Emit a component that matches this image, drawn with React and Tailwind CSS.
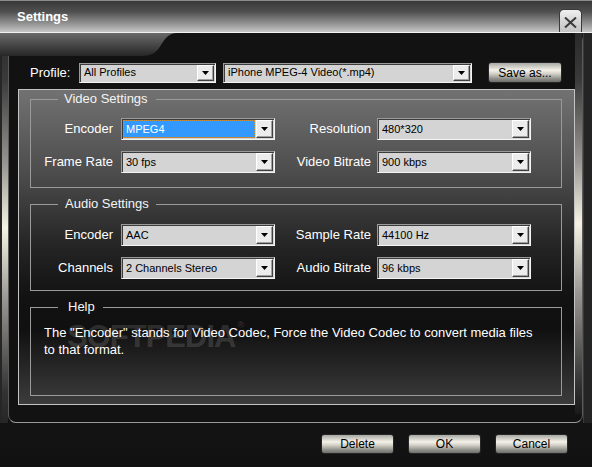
import React from "react";

const metal =
  "bg-[linear-gradient(to_bottom,#a8a8a4_0%,#f4f2e8_38%,#d6d4ca_55%,#8a8a86_85%,#6e6e6c_100%)]";

function Arrow() {
  return (
    <div className="flex w-[17px] items-center justify-center border border-t-white border-l-white border-b-[#404040] border-r-[#404040] bg-[#ececec] shadow-[inset_-1px_-1px_0_#a0a0a0]">
      <svg width="7" height="4" viewBox="0 0 7 4">
        <path d="M0 0H7L3.5 4Z" fill="#000" />
      </svg>
    </div>
  );
}

function Select({ value, size, focused }) {
  return (
    <div
      className={`flex ${size} border border-t-[#9a9a9a] border-l-[#9a9a9a] border-b-[#f4f4f4] border-r-[#f4f4f4] bg-[#d4d4d4] p-[1px] shadow-[inset_1px_1px_0_#3c3c3c]`}
    >
      {focused ? (
        <div className="mr-[1px] flex flex-1 items-center border border-dotted border-[#c8903c] bg-[#3399ff] pl-[2px] text-[11px] text-white">
          {value}
        </div>
      ) : (
        <div className="flex flex-1 items-center pl-[3px] text-[11px] text-black">{value}</div>
      )}
      <Arrow />
    </div>
  );
}

function MetalButton({ children, size }) {
  return (
    <button
      className={`flex ${size} items-center justify-center rounded-[3px] border border-[#262626] ${metal} text-[12px] leading-none text-black`}
    >
      {children}
    </button>
  );
}

function Group({ title, legendPad, children, className }) {
  return (
    <fieldset className={`relative border border-[#9a9a9a] ${className}`}>
      <legend className={`ml-[27px] ${legendPad} text-[13px] leading-[16px] text-[#f4f4f4]`}>
        {title}
      </legend>
      {children}
    </fieldset>
  );
}

function Label({ children }) {
  return <div className="text-right text-[13px] text-white">{children}</div>;
}

function SettingsGrid({ rows }) {
  return (
    <div className="grid grid-cols-[82px_154px_87px_154px] items-center gap-x-[8px] gap-y-[11px]">
      {rows.map((r, i) => (
        <React.Fragment key={i}>
          <Label>{r[0]}</Label>
          <Select value={r[1]} size="h-[22px] w-[154px]" focused={r[4]} />
          <div className="-mr-[1px]">
            <Label>{r[2]}</Label>
          </div>
          <div className="-ml-[1px]">
            <Select value={r[3]} size="h-[22px] w-[154px]" />
          </div>
        </React.Fragment>
      ))}
    </div>
  );
}

export default function App() {
  return (
    <div className="flex h-[467px] w-[592px] flex-col overflow-hidden bg-[linear-gradient(to_bottom,#1e1e20_0%,#1b1b1d_60%,#111112_100%)] font-['Liberation_Sans',Arial,sans-serif]">
      {/* title bar */}
      <div className="flex h-[32px] justify-between border-t border-[#8a8a8a] bg-[linear-gradient(to_bottom,#383838_0%,#505050_35%,#9c9c9c_78%,#c6c6c6_100%)] pl-[17px] pr-[10px]">
        <div className="self-center pt-[1px] text-[13px] font-bold text-white">Settings</div>
        <button className="flex h-[23px] w-[23px] items-end justify-center self-end rounded-t-[5px] border border-b-0 border-[#3a3a3a] bg-[linear-gradient(to_bottom,#f0f0f0_0%,#d6d6d6_50%,#c4c4c4_100%)] pb-[4px]">
          <svg width="13" height="11" viewBox="0 0 13 11">
            <path d="M1 0.5L12 10.5M12 0.5L1 10.5" stroke="#3a3a3a" strokeWidth="2" />
          </svg>
        </button>
      </div>
      <div className="h-[1px] bg-[#f2f2f2]" />

      {/* body */}
      <div className="relative flex h-[390px]">
        <svg className="absolute left-0 top-0 z-10" width="180" height="23" viewBox="0 0 180 23">
          <defs>
            <linearGradient id="tab" x1="0" y1="0" x2="0" y2="1">
              <stop offset="0" stopColor="#6a6a6a" />
              <stop offset="1" stopColor="#262626" />
            </linearGradient>
          </defs>
          <path d="M0 0H178C168 0 165 6 161 12C157 19 152 23 143 23H0Z" fill="url(#tab)" />
        </svg>

        <div className="flex w-[8px] bg-[#262626] pl-[2px]">
          <div className="w-[6px] bg-[linear-gradient(to_bottom,#2a2a2a_0%,#3a3a3a_12%,#9a9894_34%,#f6f3e4_50%,#9a9894_68%,#333_92%,#262626_100%)]" />
        </div>

        <div className="flex flex-1 rounded-b-[8px] rounded-tr-[8px] border-x border-b border-x-[#5a5a5a] border-b-[#9a9a9a] bg-[#121212]">
          <div className="flex flex-1 flex-col pl-[9px] pt-[29px]">
            {/* profile row */}
            <div className="flex h-[21px] items-center pl-[12px]">
              <div className="w-[49px] text-[13px] text-white">Profile:</div>
              <Select value="All Profiles" size="h-[20px] w-[137px]" />
              <div className="ml-[7px]">
                <Select value="iPhone MPEG-4 Video(*.mp4)" size="h-[20px] w-[249px]" />
              </div>
              <div className="ml-[16px]">
                <MetalButton size="h-[21px] w-[74px]">Save as...</MetalButton>
              </div>
            </div>

            {/* main box */}
            <div className="mt-[6px] flex flex-col border border-[#c4c4c4] bg-[linear-gradient(to_bottom,#727272_0%,#4a4a4a_28%,#242424_50%,#121212_66%,#101010_76%,#3c3c3c_100%)] pb-[8px] pl-[11px] pr-[12px] pt-[1px]">
              <Group title="Video Settings" legendPad="pl-[6px] pr-[8px]" className="pb-[14px]">
                <div className="pt-[11px]">
                  <SettingsGrid
                    rows={[
                      ["Encoder", "MPEG4", "Resolution", "480*320", true],
                      ["Frame Rate", "30 fps", "Video Bitrate", "900 kbps"],
                    ]}
                  />
                </div>
              </Group>

              <Group title="Audio Settings" legendPad="pl-[7px] pr-[7px]" className="mt-[8px] pb-[11px]">
                <div className="pt-[12px]">
                  <SettingsGrid
                    rows={[
                      ["Encoder", "AAC", "Sample Rate", "44100 Hz"],
                      ["Channels", "2 Channels Stereo", "Audio Bitrate", "96 kbps"],
                    ]}
                  />
                </div>
              </Group>

              <Group title="Help" legendPad="pl-[10px] pr-[8px]" className="mt-[8px] h-[97px]">
                <div className="absolute left-[36px] top-[6px] flex items-start text-[31px] font-bold leading-none tracking-[-1px] text-white/15">
                  SOFTPEDIA
                  <span className="ml-[2px] text-[9px] tracking-normal">®</span>
                </div>
                <p className="relative pl-[13px] pt-[9px] text-[13px] leading-[17px] text-white">
                  The "Encoder" stands for Video Codec, Force the Video Codec to convert media files
                  <br />
                  to that format.
                </p>
              </Group>
            </div>
          </div>
          <div className="mb-[8px] w-[7px] bg-[linear-gradient(to_bottom,#2a2a2a_0%,#3a3a3a_12%,#9a9894_34%,#f6f3e4_50%,#9a9894_68%,#333_92%,#1a1a1a_100%)]" />
        </div>

        <div className="w-[9px] border-l border-[#3a3a3a] bg-[#242424]" />
      </div>

      {/* footer */}
      <div className="flex flex-1 items-start justify-end gap-[14px] pr-[24px] pt-[11px]">
        <MetalButton size="h-[20px] w-[73px]">Delete</MetalButton>
        <MetalButton size="h-[20px] w-[73px]">OK</MetalButton>
        <MetalButton size="h-[20px] w-[73px]">Cancel</MetalButton>
      </div>
    </div>
  );
}
